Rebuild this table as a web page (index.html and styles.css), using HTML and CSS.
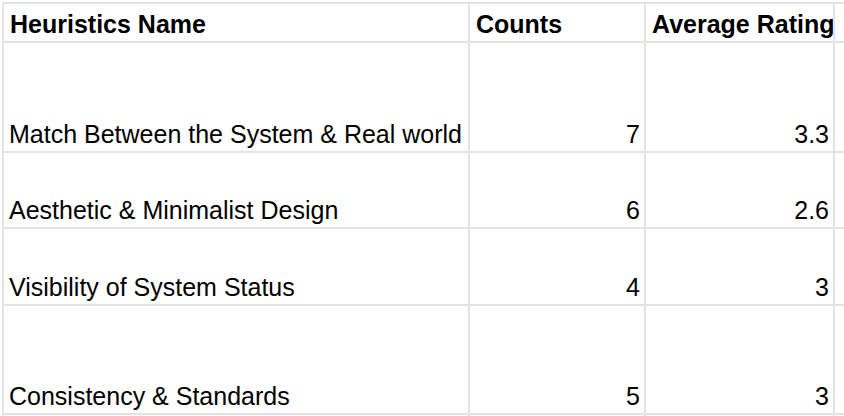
FILE: index.html
```html
<!DOCTYPE html>
<html lang="en">
<head>
<meta charset="utf-8">
<title>Heuristics</title>
<link rel="stylesheet" href="styles.css">
</head>
<body>
<div class="sheet">
  <div class="cell head">Heuristics Name</div>
  <div class="cell head">Counts</div>
  <div class="cell head">Average Rating</div>
  <div class="cell blank"></div>

  <div class="cell">Match Between the System &amp; Real world</div>
  <div class="cell num">7</div>
  <div class="cell num">3.3</div>
  <div class="cell blank"></div>

  <div class="cell">Aesthetic &amp; Minimalist Design</div>
  <div class="cell num">6</div>
  <div class="cell num">2.6</div>
  <div class="cell blank"></div>

  <div class="cell">Visibility of System Status</div>
  <div class="cell num">4</div>
  <div class="cell num">3</div>
  <div class="cell blank"></div>

  <div class="cell">Consistency &amp; Standards</div>
  <div class="cell num">5</div>
  <div class="cell num">3</div>
  <div class="cell blank"></div>

  <div class="cell blank"></div>
  <div class="cell blank"></div>
  <div class="cell blank"></div>
  <div class="cell blank"></div>
</div>
</body>
</html>
```

FILE: styles.css
```css
html, body {
  margin: 0;
  padding: 0;
  background: #ffffff;
  overflow: hidden;
}

.sheet {
  margin: 2px 0 0 2px;
  padding: 2px 0 0 2px;
  display: grid;
  grid-template-columns: 464px 174px 187px 9px;
  grid-template-rows: 37px 108px 74px 75px 107px 1px;
  gap: 2px;
  background: #e3e3e3;
  width: max-content;
  font-family: "Liberation Sans", Arial, sans-serif;
  font-size: 25px;
  color: #000000;
}

.cell {
  background: #ffffff;
  display: flex;
  align-items: flex-end;
  padding: 0 4px 3px 5px;
  line-height: 28px;
  white-space: nowrap;
  overflow: hidden;
}

.blank {
  padding: 0;
}

.head {
  font-weight: bold;
  padding-left: 6px;
}

.num {
  justify-content: flex-end;
}
```
